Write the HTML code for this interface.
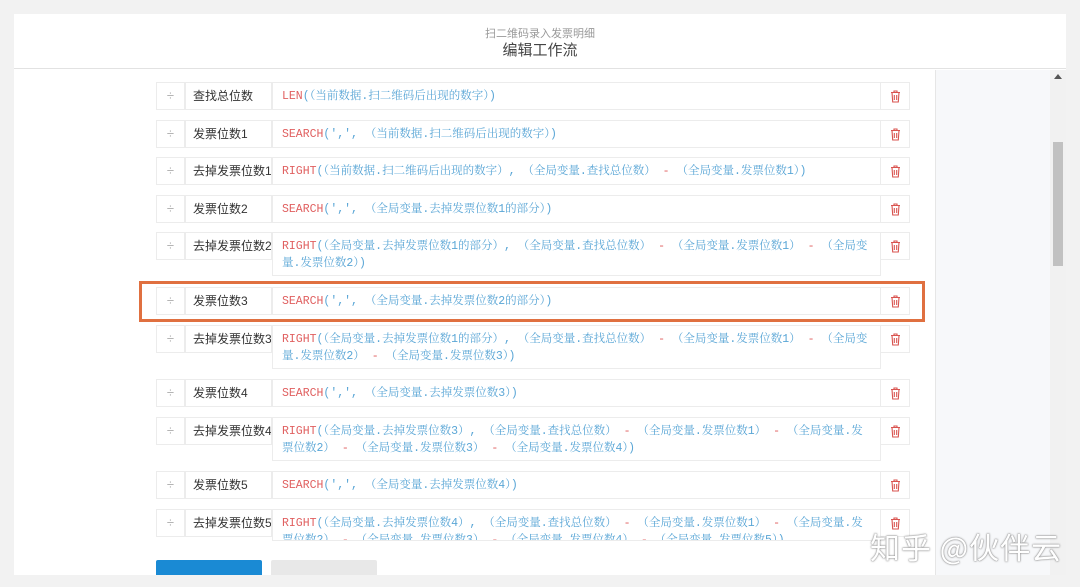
<!DOCTYPE html>
<html><head><meta charset="utf-8"><style>
*{margin:0;padding:0;box-sizing:border-box}
html,body{width:1080px;height:587px}
body{background:#f2f2f2;position:relative;overflow:hidden;font-family:"Liberation Sans","Noto Sans CJK SC",sans-serif}
.modal{position:absolute;left:14px;top:14px;width:1052px;height:561px;background:#fff;overflow:hidden}
.hdr{position:absolute;left:0;top:0;width:1052px;height:55px;border-bottom:1px solid #e2e2e2;text-align:center}
.hdr .s{position:absolute;top:11px;width:100%;font-size:11px;color:#999}
.hdr .t{position:absolute;top:25px;width:100%;font-size:15px;color:#444}
.side{position:absolute;left:921px;top:56px;width:115px;height:505px;background:#f7f8fa;border-left:1px solid #e6e6e6}
.sb{position:absolute;left:1036px;top:56px;width:16px;height:505px;background:#f1f1f1}
.thumb{position:absolute;left:3px;top:72px;width:10px;height:124px;background:#c1c1c1}
.up{position:absolute;left:4px;top:4px;width:0;height:0;border-left:4px solid transparent;border-right:4px solid transparent;border-bottom:5px solid #555}
.row{position:absolute;left:156px;width:754px}
.c{position:absolute;top:0;border:1px solid #ececec;background:#fff}
.d{left:0;width:29px;height:28px;color:#aaa;font-size:13px;text-align:center;line-height:26px}
.n{left:29px;width:87px;height:28px;font-size:12px;color:#333;line-height:26px;padding-left:7px;white-space:nowrap;overflow:hidden}
.f{left:116px;width:609px;padding:6px 8px 3px 9px;font-family:"Liberation Mono","Noto Serif CJK SC",monospace;font-size:11.5px;line-height:16.5px;color:#5aa6d6;word-break:break-all;min-height:28px}
.f b{font-weight:normal;color:#e06060}
.x{left:724px;width:30px;height:28px}
.x svg{position:absolute;left:9px;top:7px}
.btn{position:absolute;width:106px}
</style></head><body>
<div class="modal">
<div class="hdr"><div class="s">扫二维码录入发票明细</div><div class="t">编辑工作流</div></div>
<div class="side"></div>
<div class="sb"><div class="up"></div><div class="thumb"></div></div>
</div>
<div id="rows"></div>
<script>
var T='<svg width="11" height="13" viewBox="0 0 11 13" fill="none" stroke="#d9534f" stroke-width="1.1"><path d="M1 2.5h9M4 2.5V1h3v1.5M2 2.5l.7 9.5h5.6L9 2.5M4.3 5v5M6.7 5v5"/></svg>';
var R=[
[82,'查找总位数','<b>LEN</b>(（当前数据.扫二维码后出现的数字）)'],
[120,'发票位数1','<b>SEARCH</b>(\',\', （当前数据.扫二维码后出现的数字）)'],
[157,'去掉发票位数1','<b>RIGHT</b>(（当前数据.扫二维码后出现的数字）, （全局变量.查找总位数） <b>-</b> （全局变量.发票位数1）)'],
[195,'发票位数2','<b>SEARCH</b>(\',\', （全局变量.去掉发票位数1的部分）)'],
[232,'去掉发票位数2','<b>RIGHT</b>(（全局变量.去掉发票位数1的部分）, （全局变量.查找总位数） <b>-</b> （全局变量.发票位数1） <b>-</b> （全局变量.发票位数2）)'],
[287,'发票位数3','<b>SEARCH</b>(\',\', （全局变量.去掉发票位数2的部分）)'],
[325,'去掉发票位数3','<b>RIGHT</b>(（全局变量.去掉发票位数1的部分）, （全局变量.查找总位数） <b>-</b> （全局变量.发票位数1） <b>-</b> （全局变量.发票位数2） <b>-</b> （全局变量.发票位数3）)'],
[379,'发票位数4','<b>SEARCH</b>(\',\', （全局变量.去掉发票位数3）)'],
[417,'去掉发票位数4','<b>RIGHT</b>(（全局变量.去掉发票位数3）, （全局变量.查找总位数） <b>-</b> （全局变量.发票位数1） <b>-</b> （全局变量.发票位数2） <b>-</b> （全局变量.发票位数3） <b>-</b> （全局变量.发票位数4）)'],
[471,'发票位数5','<b>SEARCH</b>(\',\', （全局变量.去掉发票位数4）)'],
[509,'去掉发票位数5','<b>RIGHT</b>(（全局变量.去掉发票位数4）, （全局变量.查找总位数） <b>-</b> （全局变量.发票位数1） <b>-</b> （全局变量.发票位数2） <b>-</b> （全局变量.发票位数3） <b>-</b> （全局变量.发票位数4） <b>-</b> （全局变量.发票位数5）)']
];
var h='';
R.forEach(function(r){h+='<div class="row" style="top:'+r[0]+'px"><div class="c d">÷</div><div class="c n">'+r[1]+'</div><div class="c f"'+(r[0]==509?' style="height:32px;overflow:hidden"':'')+'>'+r[2]+'</div><div class="c x">'+T+'</div></div>';});
document.getElementById('rows').innerHTML=h;
</script>
<div style="position:absolute;left:14px;top:546px;width:907px;height:29px;background:#fff"></div>
<div class="btn" style="left:156px;top:560px;height:15px;background:#1a8ad4;border-radius:2px 2px 0 0"></div>
<div class="btn" style="left:271px;top:560px;height:15px;background:#e8e8e8;border-radius:2px 2px 0 0"></div>
<div style="position:absolute;left:0;top:575px;width:1080px;height:12px;background:#f2f2f2"></div>
<div style="position:absolute;left:139px;top:281px;width:786px;height:41px;border:3px solid #e07040"></div>
<div style="position:absolute;left:870px;top:524px;font-size:30px;white-space:nowrap;color:#fff;text-shadow:0 0 2px #888,0 0 1px #666;font-family:'Noto Sans CJK SC',sans-serif;letter-spacing:1px">知乎 @伙伴云</div>
</body></html>
